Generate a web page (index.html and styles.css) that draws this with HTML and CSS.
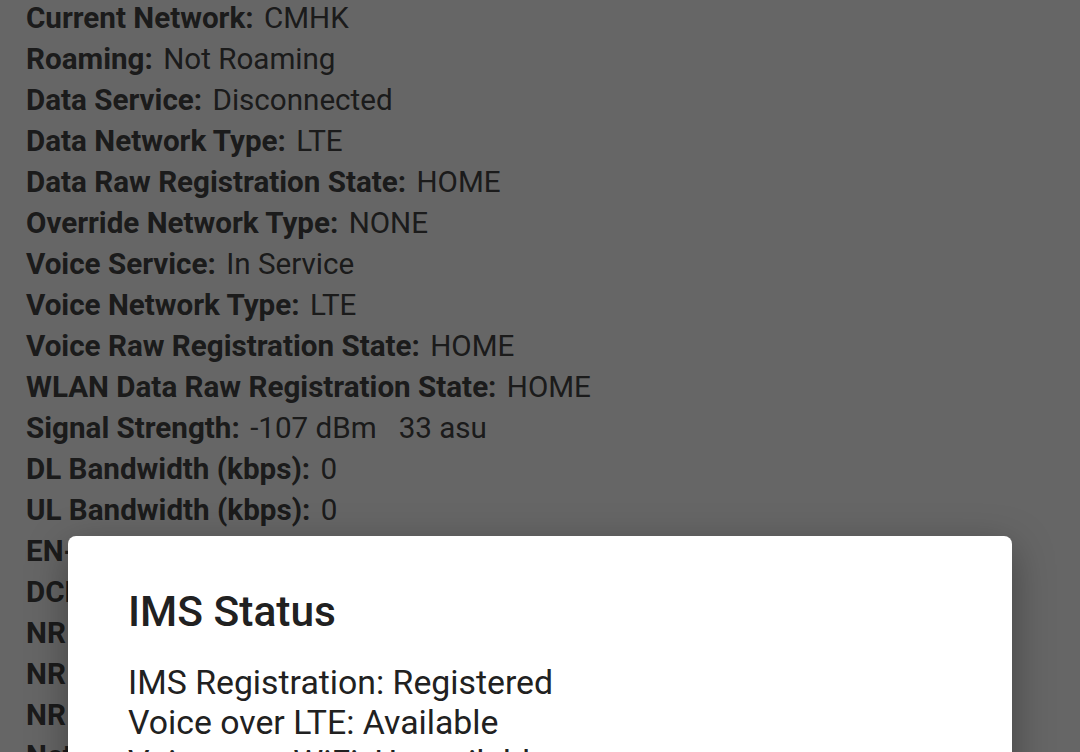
FILE: index.html
```html
<!DOCTYPE html>
<html lang="en">
<head>
  <meta charset="UTF-8">
  <meta name="viewport" content="width=device-width, initial-scale=1.0">
  <title>Phone info</title>
  <link rel="stylesheet" href="styles.css">
</head>
<body>
  <div class="info-list">
    <p><b>Current Network:</b> CMHK</p>
    <p><b>Roaming:</b> Not Roaming</p>
    <p><b>Data Service:</b> Disconnected</p>
    <p><b>Data Network Type:</b> LTE</p>
    <p><b>Data Raw Registration State:</b> HOME</p>
    <p><b>Override Network Type:</b> NONE</p>
    <p><b>Voice Service:</b> In Service</p>
    <p><b>Voice Network Type:</b> LTE</p>
    <p><b>Voice Raw Registration State:</b> HOME</p>
    <p><b>WLAN Data Raw Registration State:</b> HOME</p>
    <p><b>Signal Strength:</b> <span class="pre">-107 dBm   33 asu</span></p>
    <p><b>DL Bandwidth (kbps):</b> 0</p>
    <p><b>UL Bandwidth (kbps):</b> 0</p>
    <p><b>EN-DC Available:</b> false</p>
    <p><b>DCNR Restricted:</b> false</p>
    <p><b>NR Available:</b> false</p>
    <p><b>NR State:</b> NONE</p>
    <p><b>NR Frequency:</b> UNKNOWN</p>
    <p><b>Network Slicing Config:</b> Unable to get</p>
  </div>

  <div class="scrim">
    <div class="dialog">
      <h2>IMS Status</h2>
      <p>IMS Registration: Registered</p>
      <p>Voice over LTE: Available</p>
      <p>Voice over WiFi: Unavailable</p>
      <p>Video Calling: Unavailable</p>
      <p>UT Interface: Unavailable</p>
    </div>
  </div>
</body>
</html>
```

FILE: styles.css
```css
html, body {
  margin: 0;
  height: 100%;
  overflow: hidden;
}
body {
  background: #fff;
  font-family: Roboto, "Noto Sans", sans-serif;
  color: #444;
  position: relative;
}
.info-list {
  padding: 0 26px;
  margin-top: -2px;
}
.info-list p {
  margin: 0;
  font-size: 29.6px;
  line-height: 41px;
  white-space: nowrap;
}
.info-list b {
  font-weight: 700;
  margin-right: 3px;
}
.pre {
  white-space: pre;
}
.scrim {
  position: absolute;
  inset: 0;
  background: rgba(0, 0, 0, 0.6); /* dims the page behind the dialog */
}
.dialog {
  position: absolute;
  top: 536px;
  left: 68px;
  width: 944px;
  height: 400px;
  box-sizing: border-box;
  padding: 40px 60px;
  background: #fff;
  border-radius: 8px;
  box-shadow: 0 12px 40px rgba(0, 0, 0, 0.35);
  color: #212121;
}
.dialog h2 {
  margin: 0 0 15px;
  font-size: 42.5px;
  font-weight: 500;
  line-height: 72px;
}
.dialog p {
  margin: 0;
  font-size: 33.8px;
  line-height: 40px;
}
```
